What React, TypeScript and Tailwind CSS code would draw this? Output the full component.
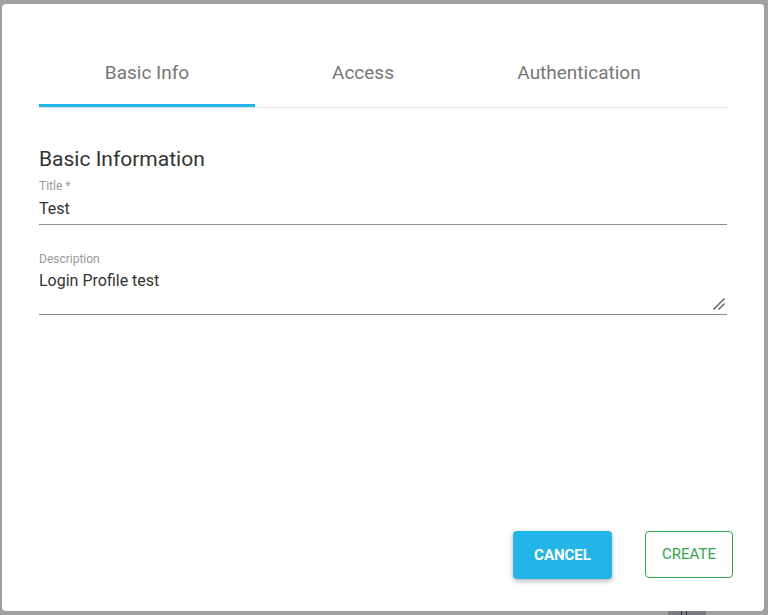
import React from "react";

export default function App() {
  return (
    <div className="relative w-[768px] h-[615px] overflow-hidden bg-[#a0a0a0] pt-[4px] pl-[2px] font-['Roboto',sans-serif]">
      {/* faint backdrop details */}
      <div className="absolute left-[668px] top-[611px] w-[38px] h-[4px] bg-[#7a7a80]" />
      <div className="absolute left-[681px] top-[611px] w-[1px] h-[4px] bg-[#333]" />
      <div className="absolute left-[686px] top-[611px] w-[1px] h-[4px] bg-[#333]" />
      <div className="relative w-[762px] h-[607px] bg-white rounded-[4px] flex flex-col pl-[37px] pr-[31px] pt-[37px] pb-[32px]">
        <div className="mr-[6px] flex border-b border-[#e2e2e2]">
          <div className="w-[216px] flex flex-col">
            <div className="h-[63px] pt-[1px] flex items-center justify-center text-[19px] text-[#777777]">Basic Info</div>
            <div className="h-[3px] bg-[#22b5ea]" />
          </div>
          <div className="w-[216px] flex flex-col">
            <div className="h-[63px] pt-[1px] flex items-center justify-center text-[19px] text-[#777777]">Access</div>
            <div className="h-[3px]" />
          </div>
          <div className="w-[216px] flex flex-col">
            <div className="h-[63px] pt-[1px] flex items-center justify-center text-[19px] text-[#777777]">Authentication</div>
            <div className="h-[3px]" />
          </div>
        </div>

        <div className="mr-[6px] flex flex-col">
          <div className="mt-[39px] text-[21px] leading-[25px] text-[#333333]">Basic Information</div>
          <div className="mt-[7px] text-[12px] leading-[14px] text-[#9a9a9a]">Title *</div>
          <div className="mt-[6px] pb-[6px] border-b border-[#8c8c8c] text-[16px] leading-[19px] text-[#333333]">Test</div>
          <div className="mt-[27px] text-[12px] leading-[14px] text-[#9a9a9a]">Description</div>
          <div className="relative mt-[5px] h-[44px] border-b border-[#8c8c8c] text-[16px] leading-[19px] text-[#333333]">
            Login Profile test
            <svg className="absolute right-[1px] bottom-[3px]" width="14" height="14" viewBox="0 0 14 14">
              <line x1="1.5" y1="12.5" x2="12.5" y2="1.5" stroke="#555" strokeWidth="1.2" />
              <line x1="6.5" y1="12.5" x2="12.5" y2="6.5" stroke="#555" strokeWidth="1.2" />
            </svg>
          </div>
        </div>

        <div className="mt-auto flex justify-end items-start gap-[33px]">
          <button className="w-[99px] h-[48px] rounded-[4px] bg-[#22b5ea] text-white text-[15px] font-bold shadow-[0_2px_5px_rgba(0,0,0,0.3)]">
            CANCEL
          </button>
          <button className="w-[88px] h-[47px] rounded-[4px] border border-[#2ea84a] text-[#2ea84a] text-[15px] font-normal">
            CREATE
          </button>
        </div>
      </div>
    </div>
  );
}
